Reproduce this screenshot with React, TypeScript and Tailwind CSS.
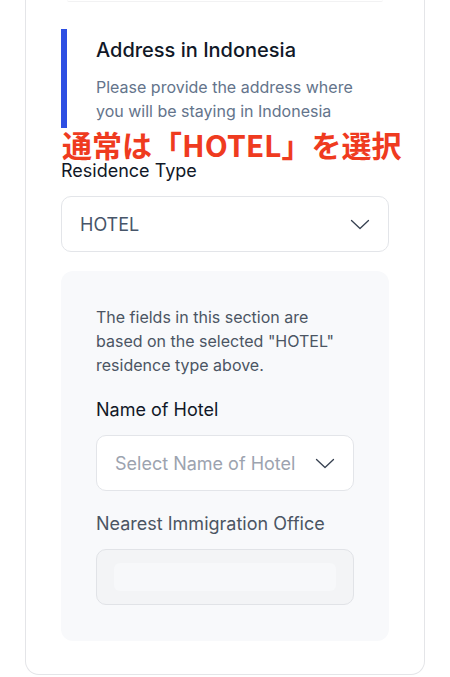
const Chevron = () => (
  <svg width="20" height="11" viewBox="0 0 20 11" fill="none" className="shrink-0">
    <polyline points="1.5,1.5 10,9.5 18.5,1.5" stroke="#374151" strokeWidth="1.3" strokeLinecap="round" strokeLinejoin="round" />
  </svg>
);

const App = () => {
  return (
    <div className="min-h-[677px] bg-white font-['Inter',sans-serif]">
      <div className="relative mx-[25px] rounded-b-[14px] border-x border-b border-[#e4e5e8] px-[35px] pb-[33px]">
        <div className="mx-[6px] h-[2px] rounded-b-md border-b border-[#f2f2f3]" />

        <div className="mt-[27px] border-l-[6px] border-[#2d4fe3] pb-[5px] pl-[29px] pt-[7px]">
          <h2 className="text-[20px] font-medium leading-[28px] text-[#111827]">Address in Indonesia</h2>
          <p className="mt-[11px] text-[16px] leading-[24px] text-[#64748b]">
            Please provide the address where
            <br />
            you will be staying in Indonesia
          </p>
        </div>

        <p className="absolute left-[36px] top-[131px] font-['Noto_Sans_CJK_JP',sans-serif] text-[30px] font-bold leading-[26px] text-[#ef3b1f]">
          通常は「HOTEL」を選択
        </p>

        <label className="mt-[31px] block text-[18px] leading-[24px] text-[#111827]">Residence Type</label>
        <div className="mt-[13px] flex h-[56px] items-center justify-between rounded-[10px] border border-[#e3e5e9] bg-white px-[18px]">
          <span className="text-[18px] text-[#475569]">HOTEL</span>
          <Chevron />
        </div>

        <div className="mt-[19px] rounded-[12px] bg-[#f8f9fb] px-[35px] pb-[36px] pt-[34px]">
          <p className="text-[16px] leading-[24px] text-[#4b5563]">
            The fields in this section are
            <br />
            based on the selected "HOTEL"
            <br />
            residence type above.
          </p>

          <label className="mt-[21px] block text-[18px] leading-[24px] text-[#111827]">Name of Hotel</label>
          <div className="mt-[13px] flex h-[56px] items-center justify-between rounded-[10px] border border-[#e3e5e9] bg-white px-[18px]">
            <span className="text-[18px] text-[#9ca3af]">Select Name of Hotel</span>
            <Chevron />
          </div>

          <label className="mt-[21px] block text-[18px] leading-[24px] text-[#4b5563]">Nearest Immigration Office</label>
          <div className="mt-[13px] flex h-[56px] items-center rounded-[10px] border border-[#e1e3e7] bg-[#f3f4f6] px-[17px]">
            <div className="h-[28px] w-full rounded-[6px] bg-[#f7f8fa]" />
          </div>
        </div>
      </div>
    </div>
  );
};

export default App;
